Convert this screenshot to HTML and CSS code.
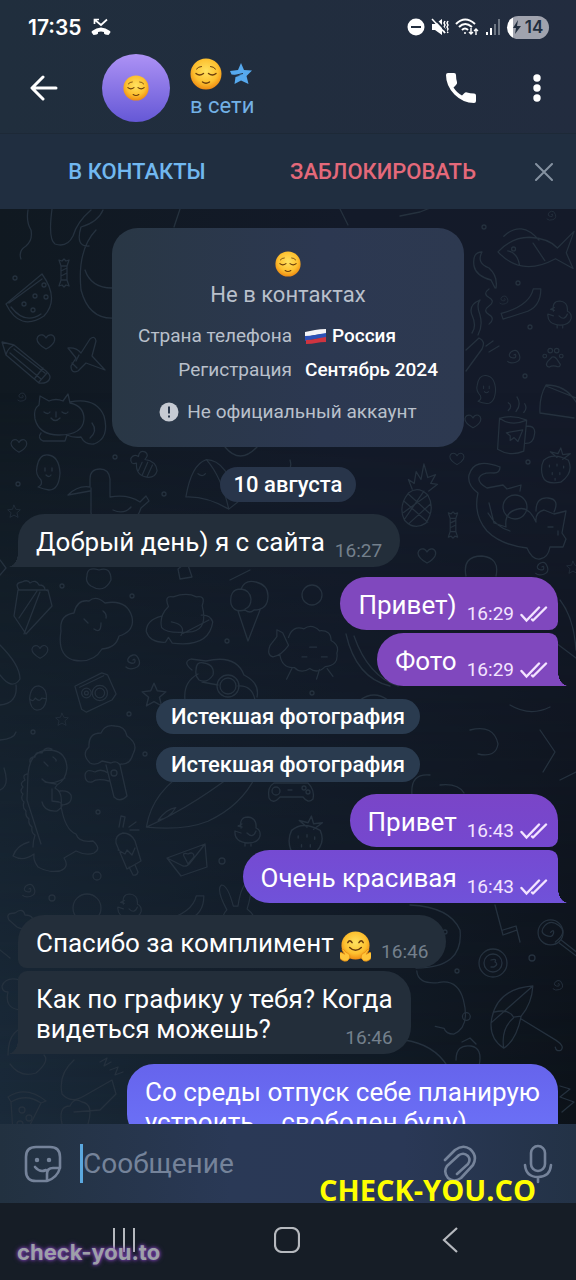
FILE: index.html
```html
<!DOCTYPE html>
<html lang="ru">
<head>
<meta charset="utf-8">
<meta name="viewport" content="width=device-width, initial-scale=1">
<title>Чат</title>
<link rel="stylesheet" href="styles.css">
</head>
<body>
<svg class="defs" aria-hidden="true">
  <defs>
    <radialGradient id="face" cx="50%" cy="40%" r="60%"><stop offset="0" stop-color="#ffe260"/><stop offset=".65" stop-color="#fdc02f"/><stop offset="1" stop-color="#ee8a12"/></radialGradient>
    <symbol id="relieved" viewBox="0 0 32 32">
      <circle cx="16" cy="16" r="15.5" fill="url(#face)"/>
      <g fill="none" stroke="#6b3d0c" stroke-width="1.4" stroke-linecap="round"><path d="M6 15.5q3.500 3 7.500 0M18.500 15.500q4 3 7.500 0M12.500 24q3.500 2.500 7 0"/><path d="M6.500 11q2-2.500 5-2.500M20.500 8.500q3 0 5 2.500" stroke-width="1"/></g>
    </symbol>
    <symbol id="hug" viewBox="0 0 32 32">
      <circle cx="16" cy="15" r="14.500" fill="url(#face)"/>
      <g fill="none" stroke="#6b3d0c" stroke-width="1.500" stroke-linecap="round"><path d="M8 12q2-4 4.500 0M19.500 12q2.500-4 4.500 0M10 17q6 6 12 0"/></g>
      <g fill="#ffc63a" stroke="#e58a10" stroke-width=".8" stroke-linejoin="round"><path d="M1 22l4 2-3-5q2-1 4 3l2 1q3 1 2 5-2 4-6 3-4-1-5-5l-.5-2z"/><path d="M31 22l-4 2 3-5q-2-1-4 3l-2 1q-3 1-2 5 2 4 6 3 4-1 5-5l.5-2z"/></g>
    </symbol>
    <symbol id="checks" viewBox="0 0 28 18"><path d="M1.500 10l5 5.500L19 2.500M13 15.500L26 2.500M12 14.500l1 1" fill="none" stroke="currentColor" stroke-width="2.400" stroke-linecap="round"/></symbol>

    <symbol id="d-spiral" viewBox="0 0 20 20"><path d="M10 10q2-2 2 1t-4 2-3-4 5-4 6 5-4 8-9-1"/></symbol>
    <symbol id="d-heart" viewBox="0 0 20 18"><path d="M10 16Q1 11 1 6q1-5 6-4 2 1 3 3 2-4 6-3 4 2 2 7-2 4-8 7z"/></symbol>
    <symbol id="d-star" viewBox="0 0 24 24"><path d="M12 2l3 7 8 1-6 5 2 8-7-4-7 4 2-8-6-5 8-1z"/></symbol>
    <symbol id="d-candy" viewBox="0 0 14 30"><path d="M4 8h6v14H4zM4 8L2 2l3 1 2-2 2 2 3-1-2 6M4 22l-2 6 3-1 2 2 2-2 3 1-2-6M4 13l6-3M4 18l6-3"/></symbol>
    <symbol id="d-melon" viewBox="0 0 52 54"><path d="M2 32L38 2q18 25 2 42Q16 60 2 32zM5 31l33-24M7 35q14 18 30 7"/><circle cx="20" cy="32" r="2"/><circle cx="31" cy="24" r="2"/><circle cx="42" cy="25" r="2"/><circle cx="29" cy="38" r="2"/><circle cx="40" cy="13" r="2"/></symbol>
    <symbol id="d-pencil" viewBox="0 0 52 46"><path d="M1 1l12 3 32 26q6 5 3 9t-10 3L5 14zM5 14q1-6 8-10M9 12l31 26M13 8l31 24M34 37l8-10M38 41l8-9"/></symbol>
    <symbol id="d-plane" viewBox="0 0 42 38"><path d="M2 12q8-1 13 5l9-14q5-4 6 2l-4 15 13 14-19-7-8 8q-7 3-7-5l5-8zM6 27l5 5M13 19l-3 6"/></symbol>
    <symbol id="d-cat" viewBox="0 0 80 54"><path d="M3 26Q1 16 7 12L8 3l9 5q7-3 14 0l5-7 2 9q14 3 14 16-1 16-25 16Q7 42 3 26zM38 9q26-5 34 14 6 22-10 28-9 1-13-7-8 1-14-2M60 30q6 8-2 15M9 40q-4 5 2 8h22l2-6M12 19q4 3 6 0M30 19q4 3 6 0M24 19v5M19 25q4 5 9 0"/></symbol>
    <symbol id="d-ghost" viewBox="0 0 28 40"><path d="M3 14Q5 1 14 2q11 1 12 18-1 17-11 17-6-1-11-3 5-2 3-7-6-6-4-13zM11 15v3M18 15v3M12 22q3 3 5 0"/></symbol>
    <symbol id="d-bird" viewBox="0 0 84 50"><path d="M2 28q10-10 22-8v-8q0-10 10-10 9 0 10 10v18q18-3 30 5l6-6 3 5-8 7q-4 14-18 14H36q-12-1-11-12V21M2 28l22-4M65 40q-7 8-18 3"/></symbol>
    <symbol id="d-chick" viewBox="0 0 28 32"><path d="M8 13Q6 2 15 2q9 1 8 11 5 2 4 8-2 7-12 7Q1 27 2 16l6 2M9 9l-4 2 4 1M12 28v3M18 28v3M14 18q6 6 9-2"/></symbol>
    <symbol id="d-paw" viewBox="0 0 24 24"><path d="M6 17l5-5q3-1 5 2l4 6q0 4-5 2-4-1-7 1-5-1-2-6z"/><circle cx="3" cy="11" r="2"/><circle cx="9" cy="5" r="2.500"/><circle cx="16" cy="5" r="2.500"/><circle cx="21" cy="11" r="2"/></symbol>
    <symbol id="d-mug" viewBox="0 0 44 64"><path d="M5 24q14-4 28 2l-3 32q-14 6-27-2zM5 24q12 9 28 2M33 32q10 0 8 9-1 9-9 9M12 39l17-3-5 12-4-4-4 3v-5zM14 16q5-5 0-8M22 17q6-7 1-15M30 18q4-4 1-9"/></symbol>
    <symbol id="d-berry" viewBox="0 0 36 40"><path d="M4 14q10-9 26 0 6 13-8 23Q6 40 3 31 0 22 4 14zM18 11l-7-6 8 2 3-6 2 7 8-1-8 6M10 19v2M18 18v2M25 20v2M13 27v2M21 27v2M16 33v2"/></symbol>
    <symbol id="d-pineapple" viewBox="0 0 42 68"><path d="M8 32q10-8 20 2 8 14-2 29-12 8-22-3-7-14 4-28zM12 28L8 18l6 4 2-12 5 8 3-16 4 14 8-3-5 9 7 1-9 7M3 40l25 22M8 33l22 20M28 34L3 52M31 43L9 63M4 59L24 30"/></symbol>
    <symbol id="d-lazycat" viewBox="0 0 104 102"><path d="M34 6Q8-4 3 14q-2 10 9 18-5 22 9 38 14 14 40 17 5 12 13 11 8-1 10-12h13l3-8-4-6 4-22-12 3-10-4q-9 2-8 12-7-16-18-13-14 3-12 18l-12-4-5-20M34 6q0 6-6 6-13-1-15 5-1 5 8 10l16-3 4 4 14-4-1 6M22 52q8 14 22 18M82 66h5M92 70v4M70 50q0-14 12-13t6 14"/><circle cx="49" cy="46" r="12"/></symbol>
    <symbol id="d-fish" viewBox="0 0 82 54"><path d="M2 32q14-15 32-15 20 1 29 11l17-17-8 22 7 16-18-10Q26 58 2 32zM12 31q10 2 12 14M8 16q18-17 36 4M38 23l12 18"/><circle cx="18" cy="29" r="2"/></symbol>
    <symbol id="d-ribbon" viewBox="0 0 46 36"><path d="M36 2h8q0 20-18 25L4 34l-2-6q30-8 34-26z"/></symbol>
    <symbol id="d-wave" viewBox="0 0 10 40"><path d="M5 1q-7 5 0 9t0 9 0 9 0 10"/></symbol>
    <symbol id="d-cake" viewBox="0 0 42 56"><path d="M6 10L2 36l12 18 26-28-4-16zM12 54L28 12M7 38l18-27M7 10q-5-7 3-8 6-3 8 1 6-4 9 2 6 0 6 5l3 1"/></symbol>
    <symbol id="d-cloud" viewBox="0 0 78 68"><path d="M4 36q-2-16 13-18 3-14 15-12 7-6 16 2 22-4 27 14 3 14-13 19-3 12-17 13-9 15-29 11Q0 60 4 36zM27 24l4 4M46 16q4 3 3 7M37 34q7 5 7-6"/></symbol>
    <symbol id="d-bear" viewBox="0 0 74 56"><path d="M18 24Q2 28 2 40q4 12 20 11l3-5 4 6q38 5 42-22-3-8-12-7M25 14Q20 2 30 4q14-5 24 0 10-2 6 9 6 24-10 27-26 3-32-4-3-12 7-22zM28 30q16 3 10 14M40 42l27-14"/></symbol>
    <symbol id="d-icecream" viewBox="0 0 42 64"><path d="M10 32l10 30 12-31M3 25Q1 10 13 10 17 0 28 3q12 3 12 14 0 14-14 14-4 4-9 0-11 3-14-6zM13 10q9 1 10 10 0 8-6 10"/></symbol>
    <symbol id="d-sheep" viewBox="0 0 78 62"><path d="M5 22q-4 10 3 12 9-2 16-12L18 9l-6-3v7zM24 14q4-13 16-9 8-6 16 2 12-1 12 10 9 5 6 13 2 13-12 14-8 8-16 2-9 6-16-1-13 1-15-14M28 45l-6 12M56 47l-3 10M64 46l6 8M46 24h7M38 34h5M58 34h6"/></symbol>
    <symbol id="d-camera" viewBox="0 0 48 48"><path d="M2 17L30 3l6 2 9 20-4 6-27 13-5-3zM7 18l25-12"/><circle cx="28" cy="24" r="8"/><circle cx="28" cy="24" r="5"/><circle cx="14" cy="24" r="5"/><circle cx="14" cy="24" r="2"/></symbol>
    <symbol id="d-egg" viewBox="0 0 22 30"><path d="M2 16Q3 2 12 2q9 2 8 15-2 11-10 11-7-1-8-12zM2 16q4 4 6-1 5 5 7 0l5 1"/></symbol>
    <symbol id="d-tree" viewBox="0 0 56 80"><path d="M8 40Q-1 31 7 24 6 10 19 10q4-9 14-7 10 0 12 10 12 8 6 18-3 11-12 10l-1 1q-3-5-9-2l-9-2q-6 5-12 2zM24 42l8 32q6 6 13-1L38 42M26 50q-7-5-13-1-9-4-10 3 0 8 7 7 5-4 17-1"/><circle cx="32" cy="50" r="3"/></symbol>
    <symbol id="d-dino" viewBox="0 0 92 130"><path d="M18 32Q20 8 40 8q16 1 17 18-1 12-10 17l-2 3q8 4 6 18 4 24 15 28 3 9 17 7 9 8 1 12-8 3-18-2l-12 7q6 9-4 13-12 2-22-4-5-7-4-12M19 100q-12 3-16 14 10 6 21-2M18 32l-1 26 14 44M32 37q7 8 23-1M35 40l11 2M32 60q2 10 15 9 9-6 2-9l-7-1V47M50 49q8-1 11 4 2 9-9 10M34 20l4 4M43 15q4 3 3 4M17 32q-5 1-2 6-6 3-2 7-4 4 0 7-3 5 1 8-2 6 2 9-1 5 3 8-1 5 3 8-1 6 3 8-2 6-2 12M20 20q-1-5 5-5 0-6 7-4 3-7 10-4"/></symbol>
    <symbol id="d-surf" viewBox="0 0 126 88"><path d="M2 84Q8 46 48 24q38-20 75-20-10 52-58 74Q40 88 2 84zM2 84Q60 58 118 8M14 77q12-2 18-13-9 1-18 13z"/></symbol>
    <symbol id="d-pop" viewBox="0 0 30 64"><path d="M3 29q-1-8 7-10 8 0 12 8l6 20-14 8zM16 53l4 8q4 1 5-3l-3-7M5 36l7 4 2-4 5 5 3-7M6 13l2-11 4 1-2 10M16 13l7-5M17 16h9"/></symbol>
    <symbol id="d-mail" viewBox="0 0 44 36"><path d="M2 16L40 2l2 23-26 9zM2 16l16 8q4 1 7-3L40 2M20 16q-4-6 3-4 6-3 6 3l-6 7z"/></symbol>
    <symbol id="d-pad" viewBox="0 0 50 24"><path d="M8 3h34q7 7 5 16-5 5-10-2H14Q7 25 3 18 1 7 8 3zM22 10h4"/><circle cx="10" cy="11" r="4"/><circle cx="38" cy="8" r="2"/><circle cx="42" cy="12" r="2"/></symbol>
    <symbol id="d-goggles" viewBox="0 0 78 48"><path d="M10 14Q0 6 9 3l15 2q30-7 38 14 16 8 13 22M16 18Q1 26 3 44M20 26l16 3M56 30q14-1 17 14M14 14q0-9 8-7 11 2 9 12-6 9-14 5-4-4-3-10z"/><circle cx="46" cy="30" r="11"/><circle cx="46" cy="30" r="8"/></symbol>
    <symbol id="d-umbrella" viewBox="0 0 80 72"><path d="M2 40Q6 5 45 2q-1 18-12 31Q28 58 15 66 1 57 2 40zM2 40L45 2M5 29q15-4 20 5l8-1M15 66q-3-20 10-31M33 36l36 22q9 6 5 10-5 2-6-3"/></symbol>
    <symbol id="d-lolly" viewBox="0 0 60 52"><circle cx="15" cy="15" r="13"/><path d="M15 15q4-4 3 1t-8 2-1-10 15 0-4 17M26 23l31 24M24 26l29 22"/></symbol>
    <symbol id="d-swirl" viewBox="0 0 30 30"><circle cx="15" cy="15" r="14"/><circle cx="15" cy="15" r="9"/><path d="M13 12q6-2 4 2 4 2-1 5h-3"/></symbol>
    <symbol id="d-squiggle" viewBox="0 0 60 74"><path d="M2 5q1 14 22 12 20-4 26 18 7 28-10 35-8 0-10-6l-9-2"/><circle cx="53" cy="52" r="4"/></symbol>
    <symbol id="d-pizza" viewBox="0 0 44 50"><path d="M2 8Q20-4 40 12l-5 2L18 48 7 44 5 13zM5 13q15-9 30 1"/><circle cx="16" cy="21" r="3"/><circle cx="23" cy="29" r="3"/><circle cx="14" cy="35" r="3"/></symbol>
    <symbol id="d-bee" viewBox="0 0 32 32"><path d="M8 14Q1 16 2 9q3-5 8-2 1-7 7-5 5 3 0 8 12 2 13 12-2 8-11 7Q7 27 8 14zM14 13l-4 9M20 13l-6 14M25 16l-6 13"/></symbol>
    <symbol id="d-bunny" viewBox="0 0 50 60"><path d="M14 32Q2 10 8 5q7 0 13 23h5Q30 3 37 3q6 5-1 28 12 9 8 22-17 14-34 0-3-14 4-21zM19 40v3M32 40v3M23 47q4 3 6 0"/></symbol>
    <symbol id="d-cap" viewBox="0 0 60 60"><path d="M2 45Q8 10 24 5q22 0 34 45l-10 8Q24 44 2 45zM24 5q16 18 24 53M15 20q5 4 8 0"/></symbol>
  </defs>
</svg>

<div class="phone">
  <header class="top">
    <div class="status">
      <span class="clock">17:35</span>
      <svg class="missed" viewBox="0 0 20 18"><path d="M1 13q9-7 18 0 1 1 0 2l-1.500 2q-4-.5-4.500-1.500V14q-3-1-6 0v1.500Q6.500 16.500 2.500 17L1 15q-1-1 0-2z" fill="#fff"/><path d="M3.500 6V1.500H8M4 2l6 5 6-5.500" fill="none" stroke="#fff" stroke-width="1.700"/></svg>
      <div class="status-icons">
        <svg width="18" height="18" viewBox="0 0 18 18"><circle cx="9" cy="9" r="8.500" fill="#fff"/><path d="M4 9h10" stroke="#212d3e" stroke-width="2"/></svg>
        <svg width="18" height="18" viewBox="0 0 18 18" fill="none" stroke="#fff" stroke-width="1.500"><path d="M1 6h3l7-5v16l-7-5H1z" fill="#fff" stroke="none"/><path d="M14 3l-1 2 1 2-1 2 1 2-1 2 1 2M17 3l-1 2 1 2-1 2 1 2-1 2 1 2"/><path d="M3 0l13 14" stroke="#212d3e" stroke-width="2"/><path d="M1 1l13 14"/></svg>
        <svg width="24" height="18" viewBox="0 0 24 18" fill="none" stroke="#fff" stroke-width="2"><path d="M1 6q9-9 19 0M4 9q6-6 13 0M7 12q3-3 6 0"/><circle cx="10" cy="15" r="1" fill="#fff" stroke="none"/><path d="M16 10v6M14 14l2 2 2-2M21 17v-6M19 13l2-2 2 2" stroke-width="1.400"/></svg>
        <svg width="16" height="18" viewBox="0 0 16 18"><path d="M1 14h2v3H1zM5 10h2v7H5z" fill="#fff"/><path d="M9 6h2v11H9zM13 1h2v16h-2z" fill="#6d7683"/></svg>
        <span class="battery"><svg width="8" height="14" viewBox="0 0 8 14"><path d="M5 0L0 8h3l-1 6 6-8H4z" fill="#212d3e"/></svg>14</span>
      </div>
    </div>
    <div class="toolbar">
      <button class="icon-btn" aria-label="Назад"><svg width="28" height="26" viewBox="0 0 28 26" fill="none" stroke="#fff" stroke-width="3" stroke-linecap="round" stroke-linejoin="round"><path d="M26 13H3M13 2L2 13l11 11"/></svg></button>
      <div class="avatar"><svg width="26" height="26" role="img" aria-label="😌"><use href="#relieved"/></svg></div>
      <div class="peer">
        <h1 class="peer-name"><svg width="32" height="32" role="img" aria-label="😌"><use href="#relieved"/></svg><svg width="22" height="22" viewBox="0 0 22 22"><path d="M11 0l3 7 8 .5-5.500 5.500 2 8-7.500-3.500-6.500 3.500 1-7 5-1.500-9-1L0 8l8-1z" fill="#56a9ee"/><path d="M2 13l11-2.500" stroke="#212d3e"/></svg></h1>
        <div class="peer-state">в сети</div>
      </div>
      <button class="icon-btn" aria-label="Позвонить"><svg width="30" height="30" viewBox="0 0 30 30"><path d="M2 0h6q2 0 2 2 0 4 1 7 .5 1.500-1 3l-2.500 2.500Q11 20 16 22.500L18.500 20q1-1 2.500-.5 3 1 7 1 2 0 2 2V28q0 2-2 2Q17 30 8.500 21.500T0 2q0-2 2-2z" fill="#fff"/></svg></button>
      <button class="icon-btn menu" aria-label="Меню"><svg width="8" height="28" viewBox="0 0 8 28" fill="#fff"><circle cx="4" cy="4" r="3.700"/><circle cx="4" cy="14" r="3.700"/><circle cx="4" cy="24" r="3.700"/></svg></button>
    </div>
    <div class="actions">
      <button class="action add">В КОНТАКТЫ</button>
      <button class="action block">ЗАБЛОКИРОВАТЬ</button>
      <button class="dismiss" aria-label="Закрыть"><svg width="18" height="18" viewBox="0 0 18 18" stroke="#8592a1" stroke-width="2" stroke-linecap="round"><path d="M1 1l16 16M17 1L1 17"/></svg></button>
    </div>
  </header>

  <main class="chat">
    <svg class="wallpaper" viewBox="0 209 576 915" preserveAspectRatio="xMidYMid slice" aria-hidden="true">
      <path d="M28 210q-2 12 3 20 2 10-5 16-8 5-5 13M52 209q-4 30 3 35 12 4 18-8 4-14 18-26M103 210q-5 12-22 17-6 20 8 19M96 230q-19 20-15 60 8 30 34 28M85 270q6 18 27 18M180 209l-6 18M400 216l20-4 30-12M340 209l8 16M225 447q15 18 32 0M290 460q4 12-12 20"/>
      <use href="#d-candy" x="57" y="258" width="14" height="30"/><use href="#d-melon" x="4" y="272" width="52" height="54"/>
      <use href="#d-heart" x="36" y="333" width="20" height="18"/><use href="#d-pencil" x="1" y="341" width="52" height="46"/>
      <use href="#d-plane" x="66" y="336" width="42" height="38"/><use href="#d-cat" x="32" y="391" width="80" height="58"/>
      <use href="#d-heart" x="10" y="438" width="18" height="16"/><use href="#d-ghost" x="34" y="453" width="28" height="40"/>
      <use href="#d-bird" x="66" y="467" width="84" height="50"/><use href="#d-bee" x="129" y="449" width="30" height="32"/>
      <use href="#d-star" x="7" y="504" width="14" height="14"/><use href="#d-spiral" x="16" y="390" width="12" height="12"/>
      <use href="#d-cap" x="184" y="455" width="56" height="56"/>
      <use href="#d-spiral" x="545" y="208" width="13" height="13"/><use href="#d-fish" x="496" y="220" width="80" height="54"/>
      <path d="M482 252q-10 0-8 14 2 10 17 14l4 8M482 252q-6 11 7 16 9 8 7 20M480 300q-12 5-8 15 5 11 0 18M480 300q-4 5 0 15 3 11-2 20M466 350l13-12q7 3 3 11l-16 22M486 346l7-5M489 352l10-6M546 386l30 12M540 413q-1-16 6-28 20 0 30 17M540 413l34 5"/>
      <use href="#d-wave" x="484" y="288" width="10" height="38"/><use href="#d-spiral" x="498" y="293" width="12" height="12"/><use href="#d-ribbon" x="499" y="287" width="44" height="34"/>
      <use href="#d-chick" x="546" y="298" width="26" height="32"/><use href="#d-spiral" x="505" y="346" width="18" height="18"/><use href="#d-paw" x="542" y="345" width="22" height="24"/>
      <use href="#d-ghost" x="474" y="374" width="24" height="32"/><use href="#d-mug" x="494" y="395" width="44" height="62"/><use href="#d-heart" x="464" y="413" width="18" height="17"/>
      <use href="#d-berry" x="539" y="447" width="36" height="38"/><use href="#d-pineapple" x="400" y="462" width="42" height="66"/><use href="#d-lazycat" x="466" y="461" width="104" height="102"/>
      <use href="#d-candy" x="446" y="511" width="14" height="28"/><use href="#d-heart" x="449" y="450" width="16" height="18"/><use href="#d-heart" x="417" y="547" width="20" height="18"/><use href="#d-spiral" x="533" y="558" width="18" height="18"/><use href="#d-star" x="566" y="560" width="14" height="14"/>
      <path d="M466 576q-4-20 16-20 18 2 14 20M87 576q0-10 12-6 12-4 12 10-7 14-20 6-6-4-4-10M180 579l-2-10 9-7 5 15zM0 560l6 8-6 7M250 570l-20 10M0 645q20 20 20 34-8 12-20-4M0 705q18-2 16-20M0 740q14-1 16-8M0 790q10-4 4-22"/>
      <use href="#d-cake" x="12" y="580" width="42" height="56"/><use href="#d-cloud" x="57" y="595" width="78" height="68"/><use href="#d-bear" x="143" y="593" width="74" height="54"/>
      <use href="#d-icecream" x="228" y="579" width="42" height="64"/><use href="#d-sheep" x="265" y="624" width="76" height="60"/><circle cx="312" cy="595" r="10"/>
      <use href="#d-heart" x="31" y="643" width="18" height="18"/><use href="#d-spiral" x="123" y="650" width="20" height="20"/><use href="#d-camera" x="72" y="670" width="48" height="46"/>
      <use href="#d-egg" x="27" y="684" width="22" height="28"/><use href="#d-star" x="141" y="681" width="26" height="26"/><use href="#d-star" x="55" y="712" width="14" height="14"/>
      <use href="#d-goggles" x="182" y="656" width="78" height="48"/><use href="#d-tree" x="82" y="723" width="56" height="80"/><use href="#d-dino" x="10" y="742" width="92" height="130"/>
      <use href="#d-surf" x="143" y="745" width="126" height="86"/><use href="#d-pad" x="266" y="780" width="50" height="24"/><use href="#d-pop" x="113" y="814" width="30" height="64"/>
      <use href="#d-mail" x="165" y="842" width="44" height="36"/><use href="#d-chick" x="233" y="814" width="28" height="34"/><use href="#d-berry" x="282" y="815" width="50" height="44"/>
      <path d="M346 634q10 44 44 52M354 636q14 40 44 50M430 775q-20-2-18 20l18 20M440 785q18-2 24 8M540 730l15 22-12 20M560 780l16-8M560 600q14 18 16 50M552 640l24 18M470 730q24-6 28 14-2 14-20 10M510 705q20 12 40 2M360 700q14-10 28 0"/>
      <use href="#d-spiral" x="20" y="880" width="18" height="18"/><use href="#d-bunny" x="214" y="880" width="46" height="56"/><circle cx="87" cy="908" r="14"/><use href="#d-chick" x="116" y="890" width="26" height="34"/><use href="#d-ribbon" x="160" y="894" width="48" height="34"/>
      <path d="M9 920q-4-7 6-7 8-6 10 2 10 0 8 10-10 6-16 2zM20 980q-14-4-18 6 0 6 6 6-4 16 12 18M0 950l10 8M410 905q40 2 50 25 4 38-44 38M495 905l8 30 14-5M503 930l13-4 4 16"/>
      <use href="#d-lolly" x="536" y="918" width="58" height="50"/><use href="#d-swirl" x="478" y="948" width="30" height="30"/><use href="#d-spiral" x="551" y="977" width="14" height="14"/><use href="#d-squiggle" x="414" y="966" width="60" height="72"/>
      <use href="#d-umbrella" x="488" y="984" width="80" height="70"/><path d="M456 1060q0-16 15-14 12 2 8 20M462 1042l8-4 6 6M404 1040q30 4 44 27M8 1055q0-30 26-28M10 1064q10 14 26 9 14-12 8-18M74 1060q-16 14-12 34 9 10 22 2l28-16 4 14-16 16-26 2M100 1062l7-4-3 8 7-4M62 1124q-4-18 8-18 4-9 12-4 12 2 6 22M110 1070l8-3-3 8 8-3M560 1086l10 3-10 8 14 5-12 10"/>
      <use href="#d-pizza" x="6" y="1089" width="44" height="50"/>
      <g><circle cx="15" cy="278" r="2"/><circle cx="18" cy="484" r="2"/><circle cx="115" cy="457" r="2"/><circle cx="164" cy="494" r="2"/><circle cx="484" cy="227" r="2"/><circle cx="518" cy="283" r="2"/><circle cx="530" cy="327" r="2"/><circle cx="525" cy="376" r="2"/><circle cx="528" cy="462" r="2"/><circle cx="62" cy="586" r="2"/><circle cx="132" cy="596" r="2"/><circle cx="227" cy="641" r="2"/><circle cx="129" cy="714" r="2"/><circle cx="145" cy="754" r="2"/><circle cx="33" cy="732" r="2"/><circle cx="98" cy="812" r="2"/><circle cx="222" cy="861" r="3"/><circle cx="97" cy="876" r="4"/><circle cx="52" cy="898" r="3"/><circle cx="532" cy="958" r="3"/><circle cx="457" cy="971" r="2"/><circle cx="445" cy="932" r="2"/><circle cx="312" cy="693" r="2"/></g>
    </svg>

    <section class="card">
      <svg class="card-emoji" role="img" aria-label="😌"><use href="#relieved"/></svg>
      <p class="card-title">Не в контактах</p>
      <dl class="facts">
        <dt>Страна телефона</dt>
        <dd><svg class="flag" viewBox="0 0 21 15" role="img" aria-label="🇷🇺"><path d="M0 3q5-1 10-2t11-1v5q-6 0-11 1T0 8z" fill="#f4f4f7"/><path d="M0 7q5 0 10-1t11-2v5q-6 0-11 1T0 12z" fill="#2b51b8"/><path d="M1 11q5 0 9-1t11-2v5q-6 0-10 1T1 15z" fill="#cf3440"/></svg>Россия</dd>
        <dt>Регистрация</dt>
        <dd>Сентябрь 2024</dd>
      </dl>
      <p class="card-note"><svg width="20" height="20" viewBox="0 0 20 20"><circle cx="10" cy="10" r="9.500" fill="#c6cbd3"/><path d="M10 4.500v7M10 13.500v2" stroke="#2b394d" stroke-width="2"/></svg>Не официальный аккаунт</p>
    </section>

    <div class="service date">10 августа</div>
    <div class="msg in tail">Добрый день) я с сайта<time class="meta">16:27</time></div>

    <div class="msg out first group v1">Привет)<span class="meta"><time>16:29</time><svg class="checks"><use href="#checks"/></svg></span></div>
    <div class="msg out tail last v1">Фото<span class="meta"><time>16:29</time><svg class="checks"><use href="#checks"/></svg></span></div>

    <div class="service">Истекшая фотография</div>
    <div class="service">Истекшая фотография</div>

    <div class="msg out first group v2">Привет<span class="meta"><time>16:43</time><svg class="checks"><use href="#checks"/></svg></span></div>
    <div class="msg out tail last v3">Очень красивая<span class="meta"><time>16:43</time><svg class="checks"><use href="#checks"/></svg></span></div>

    <div class="msg in first group">Спасибо за комплимент <svg class="emoji" role="img" aria-label="🤗"><use href="#hug"/></svg><time class="meta">16:46</time></div>
    <div class="msg in tail last">Как по графику у тебя? Когда<br>видеться можешь?<time class="meta">16:46</time></div>

    <div class="msg out first group v4">Со среды отпуск себе планирую<br>устроить... свободен буду)</div>
  </main>

  <form class="composer">
    <button type="button" class="tool" aria-label="Стикеры"><svg width="38" height="38" viewBox="0 0 38 38" fill="none" stroke="#75839a" stroke-width="2.600" stroke-linecap="round" stroke-linejoin="round"><path d="M23 36H12Q2 36 2 26V12Q2 2 12 2h14q10 0 10 10v11Q33 33 23 36zM23 36v-7q0-6 6-6h7M11 22q5 6 11 3"/><circle cx="13" cy="15" r="1.500" fill="#75839a" stroke-width="1.500"/><circle cx="25" cy="15" r="1.500" fill="#75839a" stroke-width="1.500"/></svg></button>
    <input class="field" type="text" placeholder="Сообщение" aria-label="Сообщение">
    <button type="button" class="tool" aria-label="Прикрепить"><svg width="34" height="38" viewBox="0 0 34 38" fill="none" stroke="#75839a" stroke-width="2.600" stroke-linecap="round" stroke-linejoin="round"><path d="M2 15L12 5q8-6 15-1 8 7 3 16L18 33q-7 5-13 0-5-6-1-12l12-11q5-3 9 1 3 4 0 8L14 29"/></svg></button>
    <button type="button" class="tool" aria-label="Голосовое сообщение"><svg width="30" height="40" viewBox="0 0 30 40" fill="none" stroke="#75839a" stroke-width="2.600" stroke-linecap="round"><rect x="8" y="2" width="14" height="25" rx="7"/><path d="M2 21q1 12 13 12t13-12M15 33v5"/></svg></button>
  </form>

  <nav class="nav">
    <button aria-label="Недавние"><svg width="24" height="26" viewBox="0 0 24 26" stroke="#b6b9be" stroke-width="2"><path d="M2 1v24M12 1v24M22 1v24"/></svg></button>
    <button aria-label="Главный экран"><svg width="26" height="26" viewBox="0 0 26 26"><rect x="1" y="1" width="24" height="24" rx="7" fill="none" stroke="#b6b9be" stroke-width="2.200"/></svg></button>
    <button aria-label="Назад"><svg width="16" height="26" viewBox="0 0 16 26" fill="none" stroke="#b6b9be" stroke-width="2.200"><path d="M15 1L2 13l13 12"/></svg></button>
  </nav>

  <div class="mark mark-yellow">CHECK-YOU.CO</div>
  <div class="mark mark-glow">check-you.to</div>
</div>
</body>
</html>
```
FILE: styles.css
```css
* { box-sizing: border-box; }
body { margin: 0; background: #161d26; font-family: Roboto, "Noto Sans", sans-serif; color: #fff; }
button { border: 0; padding: 0; background: none; font: inherit; color: inherit; display: flex; align-items: center; justify-content: center; }
svg { display: block; flex: none; }
h1, p, dl, dd { margin: 0; }
.defs { position: absolute; width: 0; height: 0; }

.phone { position: relative; display: flex; flex-direction: column; height: 100vh; overflow: hidden; }

.top { background: linear-gradient(90deg, #202e3d, #222c3f); }
.status { display: flex; align-items: center; height: 54px; padding: 0 27px 0 28px; }
.clock { font: 600 21px Inter, sans-serif; }
.missed { width: 20px; height: 18px; margin-left: 9px; }
.status-icons { display: flex; align-items: center; gap: 6px; margin-left: auto; }
.battery { display: flex; align-items: center; justify-content: center; gap: 4px; width: 42px; height: 23px; border-radius: 12px; background: linear-gradient(90deg, #fff 6px, #a0a3ae 6px); color: #212d3e; font: 600 17px Inter, sans-serif; }

.toolbar { display: flex; align-items: center; height: 79px; padding: 0 10px 11px 10px; }
.icon-btn { width: 68px; height: 68px; }
.menu { width: 58px; margin-left: 13px; }
.avatar { display: grid; place-items: center; width: 68px; height: 68px; margin-left: 24px; border-radius: 50%; background: linear-gradient(#ad92f5, #6558d6); }
.peer { flex: 1; margin-left: 20px; }
.peer-name { display: flex; align-items: center; gap: 8px; }
.peer-state { margin-top: 3px; color: #73b1e6; font-size: 22px; line-height: 26px; }

.actions { display: flex; height: 76px; border-top: 1px solid #1d2937; background: #202e40; }
.action { flex: 1; font-size: 22px; font-weight: 500; }
.add { padding-left: 14px; color: #71b8f0; }
.block { padding-right: 6px; color: #e4697a; }
.dismiss { width: 64px; }

.chat { position: relative; isolation: isolate; display: flex; flex: 1; flex-direction: column; align-items: flex-start; min-height: 0; padding: 19px 18px 0; overflow: hidden; background: linear-gradient(90deg, #101921, #131a29 60%, #141a29); }
.chat::before { content: ""; position: absolute; z-index: -2; inset: 0; background: linear-gradient(90deg, #1a2a3a, #0c1219); -webkit-mask: linear-gradient(transparent 20%, #000); mask: linear-gradient(transparent 20%, #000); }
.chat > * { flex: none; }
.wallpaper { position: absolute; z-index: -1; inset: 0; width: 100%; height: 100%; fill: none; stroke: #25313e; stroke-width: 1.300; stroke-linejoin: round; stroke-linecap: round; }

.card { align-self: center; display: flex; flex-direction: column; align-items: center; padding: 23px 26px; border-radius: 26px; background: linear-gradient(90deg, #293745, #2c3851 60%, #2d3950); color: #b9c0cb; }
.card-emoji { width: 26px; height: 26px; }
.card-title { margin-top: 5px; font-size: 22px; line-height: 26px; }
.facts { display: grid; grid-template-columns: auto auto; gap: 10px 13px; margin-top: 16px; font-size: 19px; line-height: 24px; }
.facts dt { text-align: right; }
.facts dd { display: flex; align-items: center; gap: 6px; color: #fff; font-weight: 500; }
.flag { width: 21px; height: 15px; }
.card-note { display: flex; align-items: center; gap: 8px; margin-top: 18px; font-size: 19px; line-height: 24px; }

.service { align-self: center; margin-top: 13px; padding: 0 15px; border-radius: 18px; background: #2a3b4f; font-size: 22px; font-weight: 500; line-height: 35px; }
.date { margin-top: 20px; padding: 0 14px; background: #28354a; }

.msg { position: relative; margin-top: 12px; padding: 13px 18px 4px; border-radius: 27px; font-size: 26px; line-height: 30px; }
.msg::after { content: ""; display: block; clear: both; }
.in { background: #232e3a; border-radius: 27px 27px 27px 9px; }
.out { align-self: flex-end; background: var(--fill); }
.first { margin-top: 12px; }
.tail + .out { margin-top: 10px; }
.last.last { margin-top: 3px; }
.out.group { border-radius: 27px 27px 9px 27px; }
.in.tail { border-bottom-left-radius: 0; }
.out.tail { border-bottom-right-radius: 0; }
.in.last { border-top-left-radius: 9px; }
.out.last { border-top-right-radius: 9px; }
.tail::before { content: ""; position: absolute; bottom: 0; width: 10px; height: 14px; }
.in.tail::before { right: 100%; background: radial-gradient(ellipse 10px 14px at 0 0, transparent 97%, #232e3a); }
.out.tail::before { left: 100%; background: radial-gradient(ellipse 10px 14px at 100% 0, transparent 97%, var(--tip)); }
.v1 { --fill: #8048be; --tip: #8048be; }
.v2 { --fill: linear-gradient(#7a45c8, #7548cf); }
.v3 { --fill: linear-gradient(#754ad2, #7052d9); --tip: #7052d9; }
.v4 { --fill: linear-gradient(#6664ec, #6c72f8); }
.meta { display: flex; float: right; align-items: center; gap: 6px; margin: 12px 0 0 10px; font-size: 19px; line-height: 24px; }
.in .meta { color: #74808c; }
.out .meta { margin-right: -8px; color: #f3e4ff; }
.checks { width: 28px; height: 18px; }
.emoji { display: inline-block; width: 31px; height: 31px; margin: -4px 0; vertical-align: -6px; }

.composer { display: flex; align-items: center; height: 79px; padding: 0 23px 0 24px; background: linear-gradient(90deg, #223140, #2a3956 40%, #2a3856 70%, #233246); }
.tool { width: 38px; height: 44px; }
.field { flex: 1; min-width: 0; height: 39px; margin: 0 18px; padding: 0; border: 0; border-left: 3px solid #5ba8df; outline: 0; background: none; color: #fff; font: 28px Roboto, sans-serif; }
.field::placeholder { color: #75839a; opacity: 1; }
.composer .tool:last-child { width: 30px; margin-left: 44px; }

.nav { display: flex; height: 77px; padding: 0 44px 0 42px; background: #161d26; }
.nav button { flex: 1; padding-bottom: 3px; }

.mark { position: absolute; font-weight: 700; white-space: nowrap; pointer-events: none; }
.mark-yellow { right: 40px; bottom: 70px; color: #ff0; font: 700 29px/40px "Open Sans", sans-serif; }
.mark-glow { left: 17px; bottom: 14px; color: #9da0a8; font: 700 22px/28px Inter, sans-serif; text-shadow: 0 0 5px #7a3fb0, 0 0 3px #7a3fb0; }
```
